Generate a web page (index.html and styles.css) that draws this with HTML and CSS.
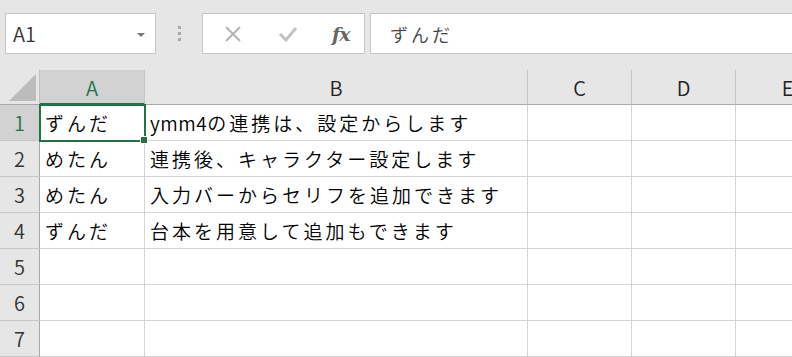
FILE: index.html
```html
<!DOCTYPE html>
<html lang="ja">
<head>
  <meta charset="UTF-8">
  <title>Book1 - Excel</title>
  <link rel="stylesheet" href="styles.css">
</head>
<body>
  <div class="toolbar">
    <div class="name-box">
      <span>A1</span>
      <span class="drop"></span>
    </div>
    <div class="grip"><i></i><i></i><i></i></div>
    <div class="fn-box">
      <svg class="ico" width="18" height="18" viewBox="0 0 18 18"><path d="M2 2 L16 16 M16 2 L2 16" stroke="#b4b4b4" stroke-width="2" fill="none"/></svg>
      <svg class="ico" width="20" height="18" viewBox="0 0 20 18"><path d="M2 9 L8 15 L18 3" stroke="#c2c2c2" stroke-width="3" fill="none"/></svg>
      <span class="fx">fx</span>
    </div>
    <div class="formula">ずんだ</div>
  </div>

  <div class="sheet">
    <div class="corner"><span class="tri"></span></div>
    <div class="col-head active">A</div>
    <div class="col-head">B</div>
    <div class="col-head">C</div>
    <div class="col-head">D</div>
    <div class="col-head">E</div>

    <div class="row-head active">1</div>
    <div class="cell selected">ずんだ<span class="handle"></span></div>
    <div class="cell"><span class="latin">ymm4</span>の連携は、設定からします</div>
    <div class="cell"></div><div class="cell"></div><div class="cell"></div>

    <div class="row-head">2</div>
    <div class="cell">めたん</div>
    <div class="cell">連携後、キャラクター設定します</div>
    <div class="cell"></div><div class="cell"></div><div class="cell"></div>

    <div class="row-head">3</div>
    <div class="cell">めたん</div>
    <div class="cell">入力バーからセリフを追加できます</div>
    <div class="cell"></div><div class="cell"></div><div class="cell"></div>

    <div class="row-head">4</div>
    <div class="cell">ずんだ</div>
    <div class="cell">台本を用意して追加もできます</div>
    <div class="cell"></div><div class="cell"></div><div class="cell"></div>

    <div class="row-head">5</div>
    <div class="cell"></div><div class="cell"></div><div class="cell"></div><div class="cell"></div><div class="cell"></div>

    <div class="row-head">6</div>
    <div class="cell"></div><div class="cell"></div><div class="cell"></div><div class="cell"></div><div class="cell"></div>

    <div class="row-head">7</div>
    <div class="cell"></div><div class="cell"></div><div class="cell"></div><div class="cell"></div><div class="cell"></div>
  </div>
</body>
</html>
```

FILE: styles.css
```css
body {
  margin: 0;
  padding: 0;
  background: #e6e6e6;
  font-family: "Noto Sans CJK JP", "Noto Sans", sans-serif;
  font-weight: 350;
  color: #000;
  overflow: hidden;
  height: 100vh;
}

.toolbar {
  display: flex;
  align-items: flex-start;
  height: 70px;
  padding: 13px 0 0 5px;
  box-sizing: border-box;
}

.name-box {
  width: 151px;
  height: 41px;
  box-sizing: border-box;
  background: #fff;
  border: 1px solid #c6c6c6;
  display: flex;
  align-items: center;
  justify-content: space-between;
  padding: 0 10px 0 7px;
  font-size: 20px;
  color: #333;
}

.drop {
  width: 0;
  height: 0;
  border-left: 4px solid transparent;
  border-right: 4px solid transparent;
  border-top: 4px solid #777;
  margin-top: 2px;
}

.grip {
  width: 46px;
  height: 41px;
  display: flex;
  flex-direction: column;
  align-items: center;
  justify-content: center;
  gap: 3px;
}

.grip i {
  width: 3px;
  height: 3px;
  background: #a8a8a8;
}

.fn-box {
  width: 163px;
  height: 41px;
  box-sizing: border-box;
  background: #fff;
  border: 1px solid #c6c6c6;
  display: flex;
  align-items: center;
  padding: 0 0 0 21px;
  gap: 36px;
}

.fx {
  font-family: "DejaVu Serif", "Liberation Serif", serif;
  font-style: italic;
  font-weight: bold;
  font-size: 19px;
  color: #666;
  letter-spacing: -1px;
  margin-left: -2px;
}

.formula {
  flex: 1;
  margin-left: 5px;
  height: 41px;
  box-sizing: border-box;
  background: #fff;
  border: 1px solid #c6c6c6;
  border-right: none;
  padding: 0 0 0 19px;
  display: flex;
  align-items: center;
  font-size: 18px;
  letter-spacing: 3px;
  color: #444;
}

.sheet {
  display: grid;
  grid-template-columns: 40px 105px 383px 104px 104px 104px;
  grid-template-rows: 35px repeat(7, 36px);
  background: #fff;
  overflow: hidden;
}

.corner {
  background: #e6e6e6;
  border-right: 1px solid #c0c0c0;
  border-bottom: 1px solid #a8a8a8;
  position: relative;
}

.tri {
  position: absolute;
  right: 3px;
  bottom: 3px;
  width: 0;
  height: 0;
  border-left: 27px solid transparent;
  border-bottom: 27px solid #bcbcbc;
}

.col-head {
  background: #e6e6e6;
  border-right: 1px solid #c6c6c6;
  border-bottom: 1px solid #a8a8a8;
  display: flex;
  align-items: center;
  justify-content: center;
  font-size: 20px;
  color: #222;
  padding-top: 1px;
}

.col-head.active {
  background: #d2d2d2;
  color: #217346;
  border-bottom: 2px solid #217346;
}

.row-head {
  background: #e6e6e6;
  border-right: 1px solid #a8a8a8;
  border-bottom: 1px solid #c6c6c6;
  display: flex;
  align-items: center;
  justify-content: center;
  font-size: 20px;
  color: #333;
}

.row-head.active {
  background: #d2d2d2;
  color: #217346;
}

.cell {
  border-right: 1px solid #d4d4d4;
  border-bottom: 1px solid #d4d4d4;
  display: flex;
  align-items: center;
  padding-left: 5px;
  font-size: 19px;
  letter-spacing: 3px;
  white-space: nowrap;
  color: #000;
  position: relative;
}

.latin {
  letter-spacing: 0.5px;
}

.cell.selected {
  outline: 2px solid #217346;
  outline-offset: -1px;
  z-index: 1;
}

.handle {
  position: absolute;
  right: -4px;
  bottom: -4px;
  width: 6px;
  height: 6px;
  background: #217346;
  border: 1px solid #fff;
}
```
